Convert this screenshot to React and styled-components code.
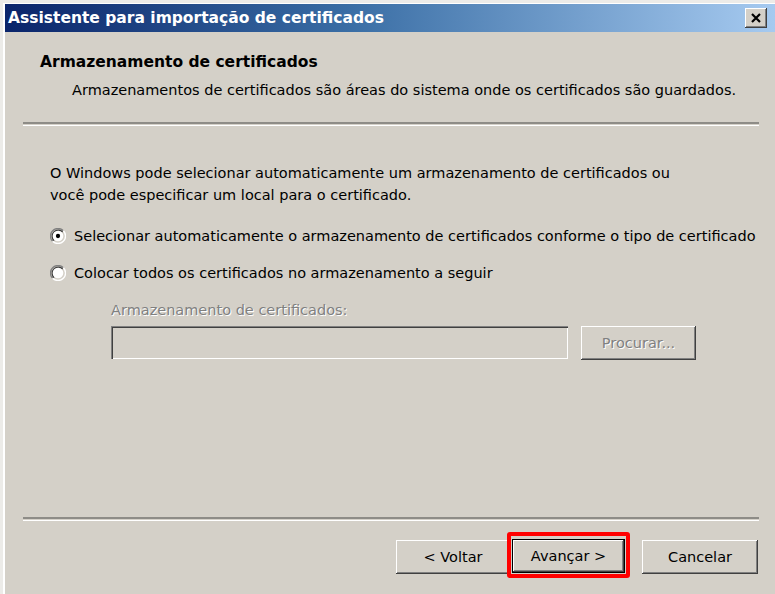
import styled, { createGlobalStyle } from "styled-components";

const GlobalStyle = createGlobalStyle`
  html, body {
    margin: 0;
    padding: 0;
    background: #ecebe8;
  }
  body {
    font-family: "DejaVu Sans", Tahoma, sans-serif;
    font-size: 14.5px;
    color: #000;
  }
`;

const Window = styled.div`
  width: 775px;
  height: 594px;
  box-sizing: border-box;
  padding: 3px 0 0 3px;
  overflow: hidden;
`;

const Frame = styled.div`
  height: 100%;
  box-sizing: border-box;
  border-left: 2px solid #fff;
  border-top: 1px solid #fff;
  background: #d4d0c8;
  display: flex;
  flex-direction: column;
`;

const TitleBar = styled.div`
  height: 28px;
  display: flex;
  align-items: center;
  justify-content: space-between;
  padding: 0 8px 0 3px;
  background: linear-gradient(90deg, #0a246a 0%, #3a6ea5 45%, #a6caf0 100%);
  color: #fff;
  font-weight: bold;
  font-size: 15.5px;
`;

const CloseBtn = styled.div`
  width: 22px;
  height: 20px;
  box-sizing: border-box;
  background: #d4d0c8;
  display: flex;
  align-items: center;
  justify-content: center;
  box-shadow: inset -1px -1px #404040, inset 1px 1px #fff,
    inset -2px -2px #808080, inset 2px 2px #d4d0c8;
`;

const Header = styled.div`
  padding: 20px 0 0 35px;
  height: 90px;
  box-sizing: border-box;
`;

const HeaderTitle = styled.div`
  font-weight: bold;
  font-size: 15.5px;
  line-height: 20px;
`;

const HeaderText = styled.div`
  margin: 8px 0 0 32px;
  line-height: 20px;
  white-space: nowrap;
`;

const Separator = styled.div`
  margin: 0 16px 0 18px;
  height: 1px;
  border-top: 2px solid #8e8c87;
  border-bottom: 1px solid #fff;
`;

const Content = styled.div`
  flex: 1;
  padding: 36px 0 0 45px;
  display: flex;
  flex-direction: column;
`;

const Para = styled.p`
  margin: 0;
  line-height: 22px;
`;

const RadioRow = styled.label`
  display: flex;
  align-items: center;
  gap: 8px;
  height: 22px;
  white-space: nowrap;
  margin-top: ${(p) => p.$top}px;
`;

const Indent = styled.div`
  margin: 16px 0 0 61px;
  display: flex;
  flex-direction: column;
`;

const DisabledLabel = styled.div`
  color: #808080;
  text-shadow: 1px 1px 0 #fff;
  line-height: 20px;
`;

const FieldRow = styled.div`
  display: flex;
  gap: 13px;
  margin-top: 6px;
`;

const Input = styled.div`
  width: 457px;
  height: 33px;
  box-sizing: border-box;
  background: #d4d0c8;
  box-shadow: inset 1px 1px #808080, inset 2px 2px #404040,
    inset -1px -1px #fff, inset -2px -2px #d4d0c8;
`;

const Button = styled.div`
  width: ${(p) => p.$w || 114}px;
  height: 34px;
  box-sizing: border-box;
  display: flex;
  align-items: center;
  justify-content: center;
  background: #d4d0c8;
  color: ${(p) => (p.$disabled ? "#808080" : "#000")};
  text-shadow: ${(p) => (p.$disabled ? "1px 1px 0 #fff" : "none")};
  box-shadow: ${(p) =>
    p.$default
      ? "inset -1px -1px #000, inset 1px 1px #000, inset -2px -2px #404040, inset 2px 2px #fff, inset -3px -3px #808080"
      : "inset -1px -1px #404040, inset 1px 1px #fff, inset -2px -2px #808080, inset 2px 2px #d4d0c8"};
`;

const Footer = styled.div`
  height: 73px;
  display: flex;
  align-items: flex-start;
  justify-content: flex-end;
  padding: 19px 17px 0 0;
  box-sizing: border-box;
`;

const Highlight = styled.div`
  border: 4px solid #f00;
  border-radius: 3px;
  padding: 3px 1px 1px 1px;
  margin: -8px 12px 0 -3px;
`;

const Radio = ({ checked }) => (
  <svg width="16" height="16" viewBox="0 0 12 12">
    <path d="M10 2 A5.5 5.5 0 0 0 2 10" fill="none" stroke="#808080" />
    <path d="M9.5 3 A4.5 4.5 0 0 0 3 9.5" fill="none" stroke="#404040" />
    <path d="M2 10 A5.5 5.5 0 0 0 10 2" fill="none" stroke="#fff" />
    <circle cx="6" cy="6" r="4" fill="#fff" />
    {checked && <circle cx="6" cy="6" r="1.6" fill="#000" />}
  </svg>
);

export default function App() {
  return (
    <>
      <GlobalStyle />
      <Window>
        <Frame>
          <TitleBar>
            <span>Assistente para importação de certificados</span>
            <CloseBtn>
              <svg width="12" height="11" viewBox="0 0 12 11">
                <path d="M2 1 L10 9 M10 1 L2 9" stroke="#000" strokeWidth="2.2" />
              </svg>
            </CloseBtn>
          </TitleBar>
          <Header>
            <HeaderTitle>Armazenamento de certificados</HeaderTitle>
            <HeaderText>
              Armazenamentos de certificados são áreas do sistema onde os certificados são guardados.
            </HeaderText>
          </Header>
          <Separator />
          <Content>
            <Para>
              O Windows pode selecionar automaticamente um armazenamento de certificados ou
              <br />
              você pode especificar um local para o certificado.
            </Para>
            <RadioRow $top={19}>
              <Radio checked />
              Selecionar automaticamente o armazenamento de certificados conforme o tipo de certificado
            </RadioRow>
            <RadioRow $top={15}>
              <Radio />
              Colocar todos os certificados no armazenamento a seguir
            </RadioRow>
            <Indent>
              <DisabledLabel>Armazenamento de certificados:</DisabledLabel>
              <FieldRow>
                <Input />
                <Button $w={115} $disabled>
                  Procurar...
                </Button>
              </FieldRow>
            </Indent>
          </Content>
          <Separator />
          <Footer>
            <Button $w={114}>&lt; Voltar</Button>
            <Highlight>
              <Button $w={113} $default>
                Avançar &gt;
              </Button>
            </Highlight>
            <Button $w={116}>Cancelar</Button>
          </Footer>
        </Frame>
      </Window>
    </>
  );
}
